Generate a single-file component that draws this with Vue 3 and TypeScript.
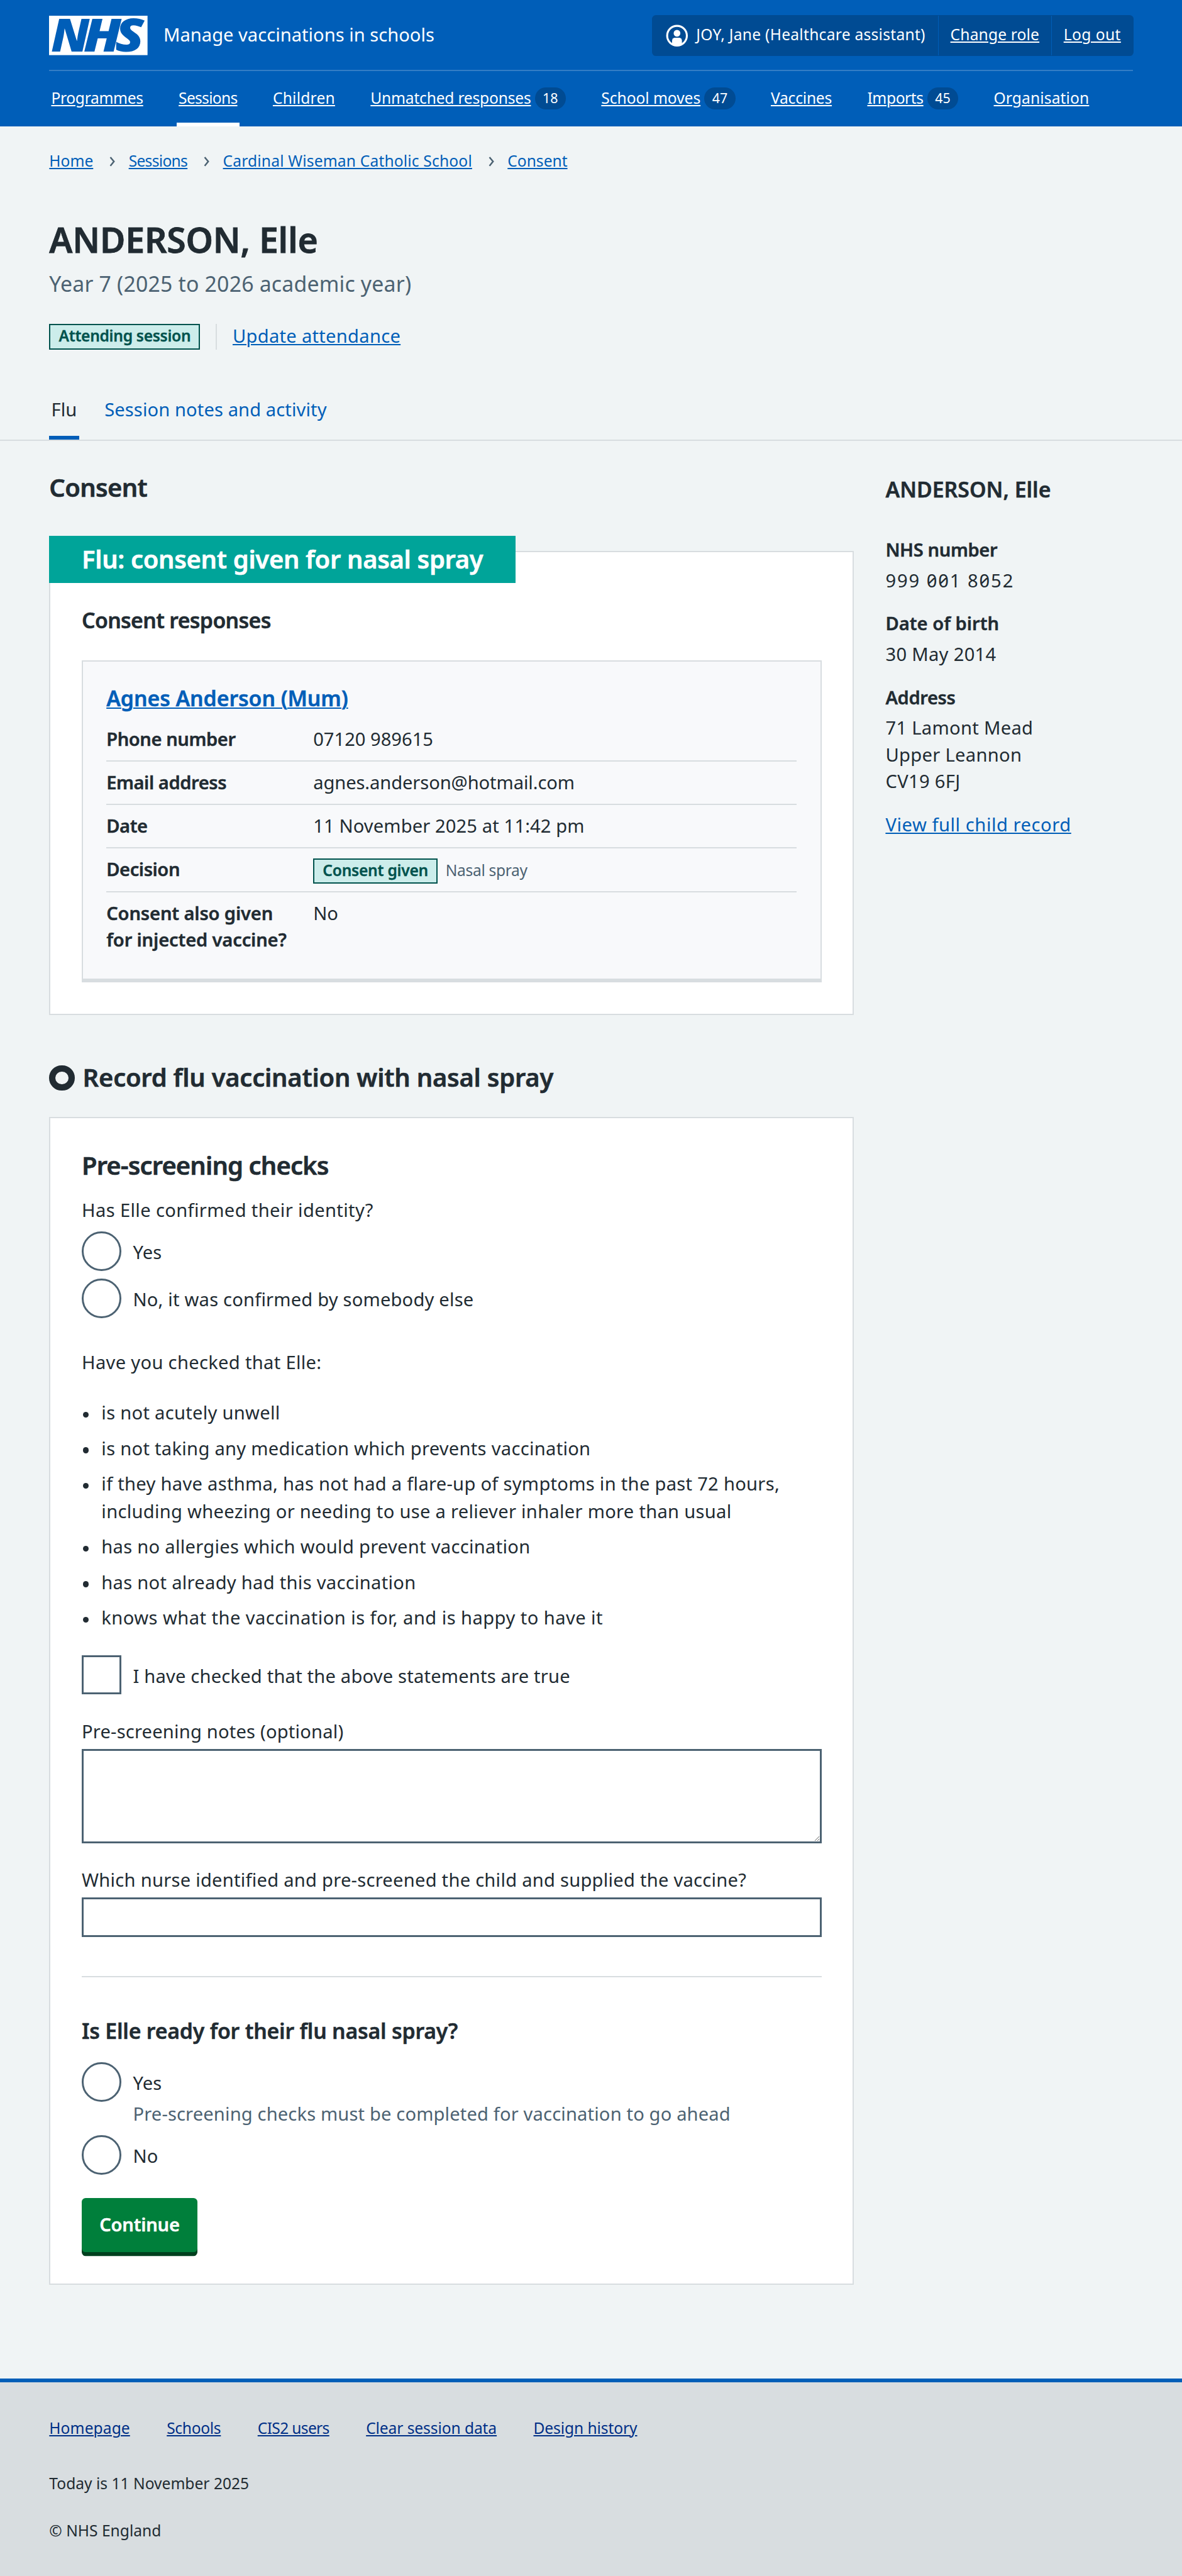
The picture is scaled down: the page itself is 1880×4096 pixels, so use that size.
<script setup lang="ts">
interface NavItem { label: string; count?: number; current?: boolean }

const nav: NavItem[] = [
  { label: 'Programmes' },
  { label: 'Sessions', current: true },
  { label: 'Children' },
  { label: 'Unmatched responses', count: 18 },
  { label: 'School moves', count: 47 },
  { label: 'Vaccines' },
  { label: 'Imports', count: 45 },
  { label: 'Organisation' },
]
const crumbs: string[] = ['Home', 'Sessions', 'Cardinal Wiseman Catholic School', 'Consent']
const checks: string[] = [
  'is not acutely unwell',
  'is not taking any medication which prevents vaccination',
  'if they have asthma, has not had a flare-up of symptoms in the past 72 hours, including wheezing or needing to use a reliever inhaler more than usual',
  'has no allergies which would prevent vaccination',
  'has not already had this vaccination',
  'knows what the vaccination is for, and is happy to have it',
]
const footerLinks: string[] = ['Homepage', 'Schools', 'CIS2 users', 'Clear session data', 'Design history']
</script>

<template>
  <div class="page">
    <header class="header">
      <div class="header-top">
        <svg class="logo" viewBox="0 0 200 80" role="img" aria-label="NHS">
          <rect width="200" height="80" fill="#fff" />
          <g class="logo-text">
            <text x="4" y="72.7" textLength="78" lengthAdjust="spacingAndGlyphs">N</text>
            <text x="70" y="72.7" textLength="77" lengthAdjust="spacingAndGlyphs">H</text>
            <text x="134" y="72.7" textLength="59" lengthAdjust="spacingAndGlyphs">S</text>
          </g>
        </svg>
        <span class="service">Manage vaccinations in schools</span>
        <div class="account">
          <span class="account-item">
            <svg class="user" viewBox="0 0 24 24">
              <circle cx="12" cy="12" r="10" fill="none" stroke="#fff" stroke-width="2" />
              <circle cx="12" cy="9.5" r="3.4" fill="#fff" />
              <path d="M7 21v-4a3 3 0 0 1 3-3h4a3 3 0 0 1 3 3v4q-5 2.4-10 0z" fill="#fff" />
            </svg>
            JOY, Jane (Healthcare assistant)
          </span>
          <span class="account-item"><a>Change role</a></span>
          <span class="account-item"><a>Log out</a></span>
        </div>
      </div>
      <nav class="nav">
        <div v-for="n in nav" :key="n.label" class="nav-item" :class="{ current: n.current }">
          <a>{{ n.label }}</a><span v-if="n.count" class="badge">{{ n.count }}</span>
        </div>
      </nav>
    </header>

    <section class="intro">
      <ol class="crumbs">
        <li v-for="(c, i) in crumbs" :key="c">
          <svg v-if="i" class="chev" viewBox="0 0 6 10"><path d="M1 .6 4.6 5 1 9.4" fill="none" stroke="#4c6272" stroke-width="1.6" /></svg>
          <a>{{ c }}</a>
        </li>
      </ol>
      <h1>ANDERSON, Elle</h1>
      <p class="caption">Year 7 (2025 to 2026 academic year)</p>
      <div class="attendance">
        <span class="tag">Attending session</span>
        <span class="bar"></span>
        <a>Update attendance</a>
      </div>
    </section>
    <div class="tabs">
      <span class="tab active">Flu</span>
      <span class="tab">Session notes and activity</span>
    </div>

    <div class="columns">
      <main>
        <h2 class="first">Consent</h2>
        <section class="card consent">
          <div class="banner">Flu: consent given for nasal spray</div>
          <h3>Consent responses</h3>
          <div class="response">
            <h4><a>Agnes Anderson (Mum)</a></h4>
            <dl>
              <div><dt>Phone number</dt><dd>07120 989615</dd></div>
              <div><dt>Email address</dt><dd class="email">agnes.anderson@hotmail.com</dd></div>
              <div><dt>Date</dt><dd class="date">11 November 2025 at 11:42 pm</dd></div>
              <div class="tall">
                <dt>Decision</dt>
                <dd class="decision"><span class="tag">Consent given</span><span class="method">Nasal spray</span></dd>
              </div>
              <div class="last"><dt>Consent also given<br>for injected vaccine?</dt><dd>No</dd></div>
            </dl>
          </div>
        </section>

        <h2 class="record"><span class="ring"></span>Record flu vaccination with nasal spray</h2>
        <section class="card form">
          <h2>Pre-screening checks</h2>
          <p class="question">Has Elle confirmed their identity?</p>
          <div class="option"><span class="radio"></span><span class="label">Yes</span></div>
          <div class="option"><span class="radio"></span><span class="label">No, it was confirmed by somebody else</span></div>
          <p class="have">Have you checked that Elle:</p>
          <ul>
            <li v-for="c in checks" :key="c">{{ c }}</li>
          </ul>
          <div class="option"><span class="checkbox"></span><span class="label">I have checked that the above statements are true</span></div>
          <label class="field notes">Pre-screening notes (optional)</label>
          <textarea></textarea>
          <label class="field nurse">Which nurse identified and pre-screened the child and supplied the vaccine?</label>
          <input type="text">
          <hr>
          <h3>Is Elle ready for their flu nasal spray?</h3>
          <div class="option"><span class="radio"></span><span class="label">Yes</span></div>
          <p class="hint">Pre-screening checks must be completed for vaccination to go ahead</p>
          <div class="option"><span class="radio"></span><span class="label">No</span></div>
          <button type="button">Continue</button>
        </section>
      </main>

      <aside>
        <h3>ANDERSON, Elle</h3>
        <h5>NHS number</h5>
        <p class="mono">999 001 8052</p>
        <h5 class="birth">Date of birth</h5>
        <p>30 May 2014</p>
        <h5>Address</h5>
        <p>71 Lamont Mead<br>Upper Leannon<br>CV19 6FJ</p>
        <p class="record-link"><a>View full child record</a></p>
      </aside>
    </div>

    <footer>
      <div class="footer-links"><a v-for="f in footerLinks" :key="f">{{ f }}</a></div>
      <p>Today is 11 November 2025</p>
      <p class="copyright">© NHS England</p>
    </footer>
  </div>
</template>

<style>
html { font-size: 15.66667px; }
body { margin: 0; background: #d8dde0; }
</style>

<style scoped>
* { box-sizing: border-box; }
.page {
  display: flex; flex-direction: column; width: 120rem; height: 4096px;
  background: #f0f4f5; color: #212b32;
  font-family: "Noto Sans", "Open Sans", sans-serif; font-size: 1.86rem; line-height: 2.8rem;
}
h1, h2, h3, h4, h5, p, ul, ol, dl, dd { margin: 0; padding: 0; }
ul, ol { list-style: none; }
h1, h2, h3, h4, h5, dt, .tag, .banner, button { font-weight: 600; -webkit-text-stroke: 0.014em currentColor; }
a { color: #005eb8; text-decoration: underline; text-decoration-thickness: 0.1rem; text-underline-offset: 0.1rem; }

.header { flex: none; height: 12.8rem; padding: 0 5rem; background: #005eb8; color: #fff; }
.header a { color: #fff; }
.header-top { display: flex; align-items: flex-start; height: 7.2rem; padding-top: 1.6rem; border-bottom: 2px solid #337ec6; }
.logo { flex: none; width: 10rem; height: 4rem; overflow: visible; }
.logo-text { font: italic 900 91.6px "Noto Sans", "Open Sans", sans-serif; fill: #005eb8; }
.service { margin-left: 1.6rem; line-height: 3.86rem; white-space: nowrap; }
.account {
  display: flex; height: 4.2rem; margin: -0.1rem -0.1rem 0 auto; padding: 0.1rem;
  background: #004b93; border-radius: 0.4rem; font-size: 1.57rem; line-height: 3.82rem; white-space: nowrap;
}
.account-item { display: flex; padding: 0 1.2rem; letter-spacing: 0.01rem; }
.account-item:first-child { padding: 0 1.28rem 0 1.22rem; letter-spacing: 0.0175rem; }
.account-item:last-child { letter-spacing: 0.027rem; }
.account-item + .account-item { border-left: 1px solid #005eb8; }
.user { width: 2.4rem; height: 2.4rem; margin: 0.8rem 0.75rem 0 0; }
.nav { display: flex; gap: 3.2rem; font-size: 1.57rem; line-height: 5.48rem; white-space: nowrap; }
.nav-item { display: flex; align-items: flex-start; height: 5.6rem; padding: 0 0.2rem; }
.nav-item.current { border-bottom: 0.4rem solid #fff; }
.nav-item:nth-child(1) a { letter-spacing: -0.021rem; }
.nav-item:nth-child(2) a { letter-spacing: -0.045rem; }
.nav-item:nth-child(3) a { letter-spacing: 0.014rem; }
.nav-item:nth-child(4) a { letter-spacing: -0.013rem; }
.nav-item:nth-child(5) a { letter-spacing: -0.003rem; }
.nav-item:nth-child(6) a { letter-spacing: -0.014rem; }
.nav-item:nth-child(7) a { letter-spacing: -0.026rem; }
.nav-item:nth-child(8) a { letter-spacing: 0.008rem; }
.badge {
  width: 3.14rem; height: 2.2rem; margin: 1.7rem 0 0 0.4rem; border-radius: 1.1rem;
  background: #004b93; font-size: 1.37rem; line-height: 2.14rem; text-align: center;
}

.intro { padding: 2.3rem 5rem 0; }
.crumbs { display: flex; font-size: 1.57rem; line-height: 2.4rem; }
.crumbs li { display: flex; }
.crumbs li:nth-child(2) a { letter-spacing: -0.044rem; }
.crumbs li:nth-child(3) a { letter-spacing: 0.0106rem; }
.chev { width: 0.6rem; height: 1rem; margin: 0.8rem 1.33rem 0 1.67rem; }
h1 { margin-top: 4.66rem; font-size: 3.53rem; line-height: 4.4rem; letter-spacing: -0.012rem; }
.caption { margin-top: 0.61rem; font-size: 2.16rem; line-height: 3.2rem; letter-spacing: 0.012rem; color: #4c6272; }
.attendance { display: flex; height: 2.6rem; margin-top: 2.49rem; line-height: 2.5rem; letter-spacing: 0.018rem; }
.tag {
  display: block; height: 2.6rem; padding: 0 0.84rem; border: 2px solid #00524d; background: #ccedeb; color: #00524d;
  font-size: 1.57rem; line-height: 2.2rem; letter-spacing: -0.019rem; white-space: nowrap;
}
.bar { width: 2px; margin: 0 1.58rem; background: #d8dde0; }
.tabs {
  display: flex; gap: 2.4rem; margin-top: 3.48rem; padding: 0 5rem; border-bottom: 2px solid #d8dde0;
  line-height: 5.32rem; letter-spacing: 0.006rem; color: #005eb8;
}
.tab { height: 5.66rem; padding: 0 0.2rem; }
.tab.active { color: #212b32; border-bottom: 0.4rem solid #005eb8; }

.columns { display: flex; flex: none; gap: 3.2rem; height: 196.7rem; padding: 0 5rem; }
main { flex: none; width: 81.7rem; }
h2 { font-size: 2.55rem; line-height: 3.6rem; }
h2.first { margin-top: 2.93rem; letter-spacing: -0.041rem; }
h3 { font-size: 2.16rem; line-height: 3.2rem; }
.card { padding: 0 calc(3.3rem - 2px); border: 2px solid #d8dde0; background: #fff; }
.consent { height: 47.1rem; margin-top: 4.64rem; }
.consent h3 { letter-spacing: -0.042rem; }
.banner {
  width: fit-content; height: 4.8rem; margin: calc(-1.5rem - 2px) 0 2.16rem -3.3rem; padding: 0 3.3rem;
  background: #00a499; color: #fff; font-size: 2.55rem; line-height: 4.72rem; letter-spacing: -0.021rem; white-space: nowrap;
}
.response {
  height: 32.7rem; margin-top: 2.44rem; padding: calc(2.26rem - 2px) calc(2.5rem - 2px) 0;
  border: 2px solid #d8dde0; border-bottom-width: 0.4rem; background: #f8f9fb;
}
h4 { font-size: 2.16rem; line-height: 3.2rem; letter-spacing: -0.005rem; }
h4 a { text-decoration-thickness: 0.15rem; }
dl { margin-top: 0.44rem; line-height: 2.7rem; }
dl > div { display: flex; height: 4.4rem; padding-top: 0.76rem; border-bottom: 2px solid #d8dde0; }
dl > div.tall { height: 4.5rem; }
dl > div.last { height: auto; border: 0; }
dt { flex: none; width: 21rem; letter-spacing: -0.028rem; white-space: nowrap; }
.last dt { letter-spacing: -0.01rem; }
.email { letter-spacing: -0.006rem; }
.date { letter-spacing: 0.0075rem; }
.decision { display: flex; }
.decision .tag { margin-top: 0.25rem; line-height: 2.14rem; letter-spacing: -0.016rem; }
.method { margin-left: 0.8rem; font-size: 1.57rem; line-height: 2.88rem; letter-spacing: -0.021rem; color: #4c6272; }

.record { display: flex; align-items: center; gap: 0.8rem; margin-top: 4.56rem; letter-spacing: -0.015rem; }
.ring { width: 2.6rem; height: 2.6rem; margin-top: 0.1rem; border: 0.65rem solid #212b32; border-radius: 50%; }
.form { height: 118.5rem; margin-top: 2.24rem; padding-top: calc(3.08rem - 2px); letter-spacing: 0.012rem; }
.form h2 { letter-spacing: -0.056rem; }
.question { margin: 1.38rem 0 0.74rem; letter-spacing: 0.023rem; }
.option { display: flex; gap: 1.2rem; height: 4rem; line-height: 4.28rem; }
.option + .option { margin-top: 0.8rem; }
.radio, .checkbox { flex: none; width: 4rem; height: 4rem; border: 0.2rem solid #4c6272; }
.radio { border-radius: 50%; }
.have { margin: 3.15rem 0 2.3rem; letter-spacing: 0.02rem; }
.form ul { margin-bottom: 2.35rem; letter-spacing: 0.018rem; }
.form li { position: relative; padding-left: 2rem; }
.form li + li { margin-top: 0.8rem; }
.form li:last-child { letter-spacing: 0.028rem; }
.form li::before {
  content: ""; position: absolute; left: 0.1rem; top: 1.25rem;
  width: 0.6rem; height: 0.6rem; border-radius: 50%; background: #212b32;
}
.field { display: block; }
.notes { margin: 2.4rem 0 0.3rem; }
.nurse { margin: 2.37rem 0 0.33rem; letter-spacing: 0.016rem; }
textarea, input { display: block; width: 100%; margin: 0; border: 0.2rem solid #4c6272; border-radius: 0; background: #fff; }
textarea { height: 9.6rem; }
input { height: 4rem; }
hr { height: 2px; margin: 4rem 0 3.79rem; border: 0; background: #d8dde0; }
.form h3 { margin-bottom: 1.6rem; letter-spacing: -0.014rem; }
.hint { margin: -0.12rem 0 0.72rem; padding-left: 5.2rem; letter-spacing: 0.009rem; color: #4c6272; }
button {
  display: block; height: 5.5rem; margin: 2.4rem 0 0; padding: 0 1.8rem; border: 0; border-radius: 0.4rem;
  background: #007f3b; box-shadow: 0 0.4rem 0 #00401e; color: #fff;
  font-family: inherit; font-size: 1.86rem; line-height: 5.36rem; letter-spacing: -0.015rem;
}

aside { padding-top: 3.33rem; letter-spacing: 0.02rem; white-space: nowrap; }
aside h3 { margin-bottom: 3.2rem; letter-spacing: 0; }
h5 { margin: 1.68rem 0 0.31rem; font-size: 1.86rem; line-height: 2.8rem; letter-spacing: -0.025rem; }
h5.birth { letter-spacing: 0; }
aside p { line-height: 2.7rem; }
aside .record-link { margin-top: 1.72rem; letter-spacing: 0.035rem; }
.mono { font-feature-settings: "zero" 1; letter-spacing: 0.123rem; }

footer { flex: 1; padding: 3.42rem 5rem 0; border-top: 0.4rem solid #005eb8; background: #d8dde0; font-size: 1.57rem; line-height: 2.4rem; }
.footer-links { display: flex; gap: 3.73rem; margin-bottom: 3.2rem; }
.footer-links a { color: #003087; letter-spacing: -0.006rem; }
.footer-links a:nth-child(1) { letter-spacing: 0.005rem; }
.footer-links a:nth-child(2) { letter-spacing: -0.02rem; }
.footer-links a:nth-child(3) { letter-spacing: -0.042rem; }
.copyright { margin-top: 2.4rem; }
</style>
